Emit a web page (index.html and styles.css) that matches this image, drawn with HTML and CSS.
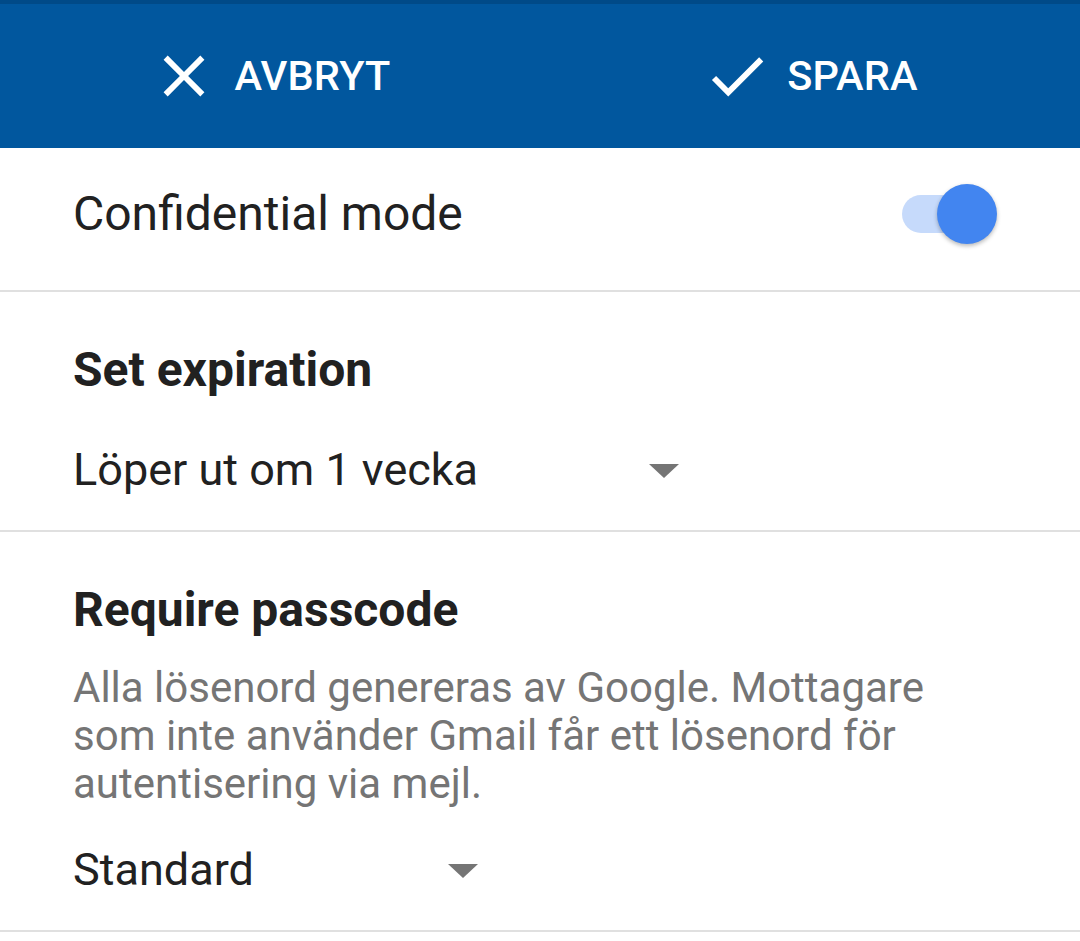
FILE: index.html
```html
<!DOCTYPE html>
<html lang="sv">
<head>
<meta charset="utf-8">
<title>Confidential mode</title>
<link rel="stylesheet" href="styles.css">
</head>
<body>
<header class="appbar">
  <div class="action">
    <svg class="icon" viewBox="0 0 24 24"><path d="M19 6.41L17.59 5 12 10.59 6.41 5 5 6.41 10.59 12 5 17.59 6.41 19 12 13.41 17.59 19 19 17.59 13.41 12z"/></svg>
    <span class="action-label">AVBRYT</span>
  </div>
  <div class="action">
    <svg class="icon" viewBox="0 0 24 24"><path d="M9 16.17L4.83 12l-1.42 1.41L9 19 21 7l-1.41-1.41z"/></svg>
    <span class="action-label">SPARA</span>
  </div>
</header>

<section class="row-toggle">
  <span class="row-title">Confidential mode</span>
  <span class="switch"><span class="switch-track"></span><span class="switch-thumb"></span></span>
</section>

<section class="block block-expiration">
  <h2 class="block-title">Set expiration</h2>
  <div class="spinner spinner-wide">
    <span class="spinner-text">Löper ut om 1 vecka</span>
    <span class="caret"></span>
  </div>
</section>

<section class="block block-passcode">
  <h2 class="block-title">Require passcode</h2>
  <p class="block-desc">Alla lösenord genereras av Google. Mottagare som inte använder Gmail får ett lösenord för autentisering via mejl.</p>
  <div class="spinner spinner-narrow">
    <span class="spinner-text">Standard</span>
    <span class="caret"></span>
  </div>
</section>
</body>
</html>
```

FILE: styles.css
```css
html, body {
  margin: 0;
  padding: 0;
  background: #ffffff;
  font-family: Roboto, "Noto Sans", "Liberation Sans", sans-serif;
  color: #212121;
}

.appbar {
  height: 144px;
  border-top: 4px solid #004a88;
  background: #01579e;
  display: flex;
}

.action {
  flex: 1;
  display: flex;
  align-items: center;
  justify-content: center;
  gap: 15px;
  color: #ffffff;
}

.icon {
  width: 70px;
  height: 70px;
  fill: #ffffff;
}

.action-label {
  font-size: 41.5px;
  font-weight: 500;
  letter-spacing: 0.2px;
  line-height: 56px;
}

.row-toggle {
  display: flex;
  align-items: center;
  justify-content: space-between;
  padding: 36px 83px 46px 73px;
  border-bottom: 2px solid #e0e0e0;
}

.row-title {
  font-size: 48px;
  line-height: 56px;
}

.switch {
  position: relative;
  width: 95px;
  height: 60px;
}

.switch-track {
  position: absolute;
  left: 0;
  top: 11px;
  width: 84px;
  height: 38px;
  border-radius: 19px;
  background: #c6dafb;
}

.switch-thumb {
  position: absolute;
  right: 0;
  top: 0;
  width: 60px;
  height: 60px;
  border-radius: 50%;
  background: #4285f0;
  box-shadow: 0 2px 4px rgba(0, 0, 0, 0.28);
}

.block {
  padding: 0 73px;
  border-bottom: 2px solid #e0e0e0;
}

.block-title {
  margin: 0;
  font-size: 48px;
  font-weight: 700;
  line-height: 56px;
  color: #212121;
}

.block-expiration {
  padding-top: 50px;
  padding-bottom: 32px;
}

.block-passcode {
  padding-top: 50px;
  padding-bottom: 32px;
}

.spinner {
  display: flex;
  align-items: center;
  justify-content: space-between;
  height: 56px;
}

.block-expiration .spinner {
  margin-top: 44px;
}

.block-passcode .spinner {
  margin-top: 34px;
}

.spinner-wide {
  width: 606px;
}

.spinner-narrow {
  width: 405px;
}

.spinner-text {
  font-size: 45px;
  line-height: 56px;
  color: #212121;
}

.caret {
  width: 0;
  height: 0;
  border-left: 15px solid transparent;
  border-right: 15px solid transparent;
  border-top: 14px solid #757575;
  margin-top: 2px;
}

.block-desc {
  margin: 26px 0 0;
  font-size: 42px;
  line-height: 48px;
  color: #757575;
  max-width: 880px;
}
```
